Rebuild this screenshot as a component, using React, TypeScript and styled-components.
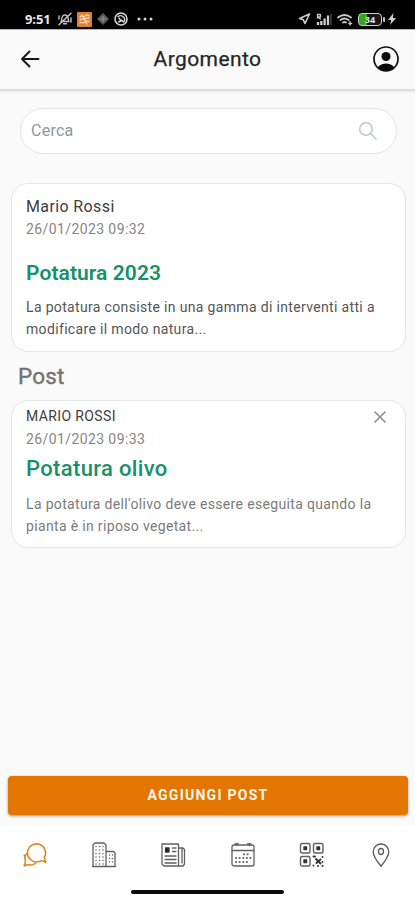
import React from "react";
import styled, { createGlobalStyle } from "styled-components";

const GlobalStyle = createGlobalStyle`
  * { box-sizing: border-box; }
  body { margin: 0; background: #fafafa; }
  h1, h2, h3, p { margin: 0; }
  button { font: inherit; border: 0; padding: 0; background: none; }
  svg { display: block; }
`;

const Screen = styled.div`
  width: 415px;
  height: 900px;
  display: flex;
  flex-direction: column;
  overflow: hidden;
  background: #fafafa;
  font-family: Roboto, sans-serif;
`;

const StatusBar = styled.div`
  flex: none;
  height: 29px;
  padding: 8px 19px 0 25px;
  display: flex;
  justify-content: space-between;
  background: #000;
`;

const StatusGroup = styled.div<{ $gap: number }>`
  display: flex;
  align-items: center;
  height: 22px;
  gap: ${(p) => p.$gap}px;
`;

const Clock = styled.span`
  width: 27px;
  margin-right: 2px;
  color: #e8e8e8;
  font: 700 13px/22px "Open Sans", sans-serif;
  letter-spacing: -0.1px;
  white-space: nowrap;
`;

const Notifications = styled.div`
  display: flex;
  align-items: center;
  gap: 5px;
`;

const OverflowDots = styled.span`
  margin-left: 4px;
`;

const Header = styled.header`
  flex: none;
  height: 62px;
  padding: 0 15px 1px 20px;
  display: flex;
  align-items: center;
  justify-content: space-between;
  border-top: 1px solid #b4b4b4;
  border-bottom: 2px solid #dedede;
  box-shadow: 0 1px 2px rgba(0, 0, 0, 0.06);
`;

const PageTitle = styled.h1`
  padding-left: 2px;
  color: #252525;
  font-size: 21px;
  font-weight: 400;
  line-height: 28px;
  letter-spacing: 0.42px;
  -webkit-text-stroke: 0.25px currentColor;
`;

const Content = styled.main`
  flex: 1;
  display: flex;
  flex-direction: column;
  padding: 17px 9px 0 11px;
`;

const SearchBox = styled.div`
  flex: none;
  height: 46px;
  margin: 0 9px 29px;
  padding: 0 18px 1px 10px;
  display: flex;
  align-items: center;
  justify-content: space-between;
  border: 1px solid #e3e5e6;
  border-radius: 23px;
  background: #fff;
  color: #8e989f;
  font-size: 16px;
  letter-spacing: 0.25px;
`;

const Card = styled.article<{ $height: number; $top: number }>`
  flex: none;
  height: ${(p) => p.$height}px;
  padding: ${(p) => p.$top}px 19px 0 14px;
  border: 1px solid #e4e6e7;
  border-radius: 17px;
  background: #fff;
`;

const AuthorRow = styled.div`
  display: flex;
  justify-content: space-between;
  align-items: center;
`;

const Author = styled.p<{ $size: number; $spacing: number }>`
  color: #404040;
  font-size: ${(p) => p.$size}px;
  line-height: 23px;
  letter-spacing: ${(p) => p.$spacing}px;
`;

const DateText = styled.p`
  color: #858585;
  font-size: 14px;
  line-height: 22px;
  letter-spacing: 0.4px;
`;

const CardTitle = styled.h2<{ $gap: number; $size: number; $weight: number; $spacing: number }>`
  margin-top: ${(p) => p.$gap}px;
  color: #189069;
  font-size: ${(p) => p.$size}px;
  font-weight: ${(p) => p.$weight};
  line-height: 28px;
  letter-spacing: ${(p) => p.$spacing}px;
`;

const Excerpt = styled.p<{ $color: string; $gap: number }>`
  margin-top: ${(p) => p.$gap}px;
  color: ${(p) => p.$color};
  font-size: 14px;
  line-height: 22px;
  letter-spacing: 0.34px;
  white-space: nowrap;
`;

const SectionTitle = styled.h2`
  flex: none;
  height: 48px;
  padding-left: 7px;
  color: #737373;
  font-size: 22.5px;
  font-weight: 400;
  line-height: 48px;
  letter-spacing: 0.2px;
  -webkit-text-stroke: 0.4px currentColor;
`;

const AddButton = styled.button`
  flex: none;
  height: 39px;
  margin: 0 7px 10px 8px;
  padding-bottom: 1px;
  border-radius: 4px;
  background: #e37600;
  box-shadow: 0 1px 3px rgba(0, 0, 0, 0.4);
  color: #fff6ea;
  font-family: Roboto, sans-serif;
  font-size: 14px;
  font-weight: 700;
  letter-spacing: 1.25px;
`;

const NavBar = styled.nav`
  flex: none;
  height: 65px;
  padding: 17px 0 0;
  display: grid;
  grid-template-columns: repeat(6, 69.3px);
  justify-items: center;
  background: #fff;
`;

const NavItem = styled.button<{ $active?: boolean }>`
  width: 26px;
  height: 26px;
  color: ${(p) => (p.$active ? "#e08326" : "#606060")};
`;

const HomeArea = styled.div`
  flex: none;
  height: 10px;
  background: #fff;
`;

const HomeIndicator = styled.div`
  width: 153px;
  height: 4px;
  margin-left: 131px;
  border-radius: 2px;
  background: #0b0b0b;
`;

const line = { fill: "none", stroke: "currentColor", strokeLinecap: "round", strokeLinejoin: "round" } as const;

const BellOffIcon = () => (
  <svg width="14" height="14" viewBox="0 0 14 14" {...line} stroke="#c4c4c4" strokeWidth="1.4">
    <path d="M3 9.5c1-1 .6-3.4 1.3-4.8C5.4 2.5 8.6 2.5 9.7 4.7c.7 1.4.3 3.8 1.3 4.8zM5.5 11.8h3M1 12.8 13 1.2M1 4v3M13 6v4" />
  </svg>
);

const AppBadgeIcon = () => (
  <svg width="15" height="15" viewBox="0 0 15 15">
    <rect width="15" height="15" rx="1" fill="#df8228" />
    <path d="M3 5c2-3 3 1 5-1s3-1 4 0M3 8c2-3 4 1 5-1s3 0 4-1M3 11c2-3 3 2 5-1s3 1 4-1M5 3l5 9" {...line} stroke="#f8dfc5" strokeWidth="1.3" />
  </svg>
);

const DiamondIcon = () => (
  <svg width="12" height="12" viewBox="0 0 12 12">
    <path d="M6 0 12 6 6 12 0 6z" fill="#5c5c5c" />
    <path d="M6 3v6M3 6h6" stroke="#929292" strokeWidth="1.2" />
  </svg>
);

const ChatBadgeIcon = () => (
  <svg width="14" height="14" viewBox="0 0 14 14" {...line} stroke="#d6d6d6" strokeWidth="1.6">
    <circle cx="7" cy="7" r="6" />
    <path d="M4 4.5q3-2 5.5.5t0 5L7.5 8M4.5 10l2.500-1-2-3" strokeWidth="1.4" />
  </svg>
);

const DotsIcon = () => (
  <svg width="16" height="4" viewBox="0 0 16 4" fill="#d6d6d6">
    <circle cx="2" cy="2" r="1.5" />
    <circle cx="8" cy="2" r="1.5" />
    <circle cx="14" cy="2" r="1.5" />
  </svg>
);

const LocationIcon = () => (
  <svg width="13" height="12" viewBox="0 0 13 12" {...line} stroke="#cfcfcf" strokeWidth="1.6">
    <path d="M11.5 1 1.5 5.5l3.800 1.300L7 10.500z" />
  </svg>
);

const SignalIcon = () => (
  <svg width="16" height="13" viewBox="0 0 16 13">
    <path d="M1.5 5V1.5h3V4h-3l3 2" {...line} stroke="#c7c7c7" strokeWidth="1.3" />
    <path d="M2 12V9M5.3 12V8M8.6 12V5.5M12 12V2.5" stroke="#cfcfcf" strokeWidth="2.3" />
    <path d="M15 12V1" stroke="#444" strokeWidth="1.5" />
  </svg>
);

const WifiIcon = () => (
  <svg width="16" height="13" viewBox="0 0 16 13" {...line} stroke="#c8c8c8" strokeWidth="1.8">
    <path d="M1 4.5q6.5-5 13 0M3.5 7q4-3 8 0M6 9.5q1.5-1 3 0" />
    <path d="M13 8.5v3.5M11.8 10.5h2.8" strokeWidth="1.3" />
  </svg>
);

const BatteryFrame = styled.div`
  display: grid;
  place-items: center;
  width: 24px;
  height: 13px;
  border: 1.5px solid #cecece;
  border-radius: 4px;
  background: linear-gradient(90deg, #35a61b 0 35%, #171717 35%);
  color: #e5e5e5;
  font: 700 9px/9px "Open Sans", sans-serif;
`;

const Power = styled.div`
  display: flex;
  align-items: center;
  gap: 1px;
  margin-right: -2px;
  &::after { content: ""; width: 2px; height: 5px; border-radius: 1px; background: #bbb; }
`;

const BoltIcon = () => (
  <svg width="8" height="12" viewBox="0 0 8 12">
    <path d="M5.500 0 0 7h3.200L2 12l6-7H4.800z" fill="#d0d0d0" />
  </svg>
);

const BackIcon = () => (
  <svg width="21" height="18" viewBox="0 0 21 18" {...line} stroke="#151515" strokeWidth="1.9">
    <path d="M9.5 1.5 2 9l7.5 7.5M2 9h16.500" />
  </svg>
);

const ProfileIcon = () => (
  <svg width="28" height="28" viewBox="0 0 28 28">
    <defs>
      <clipPath id="avatar"><circle cx="14" cy="14" r="12" /></clipPath>
    </defs>
    <circle cx="14" cy="14" r="12" fill="none" stroke="#111" strokeWidth="1.7" />
    <circle cx="14" cy="11.5" r="4.5" fill="#0b0b0b" />
    <ellipse cx="14" cy="24.5" rx="8.7" ry="6" fill="#0b0b0b" clipPath="url(#avatar)" />
  </svg>
);

const SearchIcon = () => (
  <svg width="20" height="20" viewBox="0 0 20 20" {...line} stroke="#c8cdd0" strokeWidth="1.7">
    <circle cx="8" cy="8" r="6.3" />
    <path d="m12.6 12.6 5.4 5.4" />
  </svg>
);

const CloseIcon = () => (
  <svg width="12" height="12" viewBox="0 0 12 12" {...line} stroke="#8c8c8c" strokeWidth="1.6">
    <path d="m1 1 10 10M11 1 1 11" />
  </svg>
);

const ForumIcon = () => (
  <svg width="26" height="26" viewBox="0 0 26 26" {...line} strokeWidth="1.5">
    <path d="M16 19.8A9 9 0 1 1 22.3 15.5L23.5 19.8 19.5 18.6Q18 19.6 16 19.8" />
    <path d="M5 11.5q-3.5 3.2-1.5 7.5l-1 4.5 4-.8q4 1.3 7-1.7" />
    <path d="M2.5 13.5v.1M2.500 23.500v.1M23.500 19.800v.1" strokeWidth="2.2" />
  </svg>
);

const BuildingIcon = () => (
  <svg width="26" height="26" viewBox="0 0 26 26" {...line} strokeWidth="1.3">
    <path d="M2 24.500V3L4 1h9l2 2v21.500zM15 9.500h7.500l1.500 1.500v13.500H15M1.500 24.500h23" />
    <path d="M5 4.500v18M8.500 4.500v18M12 4.500v18M18.500 13v10M21.500 13v10" strokeDasharray=".1 3.4" strokeWidth="1.5" />
  </svg>
);

const NewsIcon = () => (
  <svg width="26" height="26" viewBox="0 0 26 26" {...line} strokeWidth="1.3">
    <path d="M2 2h16.500v22H4l-2-2zM18.500 6H23l1.500 1.500V22L23 24h-4.500M22 7v14" />
    <path d="M12.500 6H16M12.500 9.500H16M5 14h11M5 17.500h11M5 21h11" />
    <rect x="5.5" y="6" width="3.5" height="4" fill="#222" stroke="#333" />
  </svg>
);

const CalendarIcon = () => (
  <svg width="26" height="26" viewBox="0 0 26 26" {...line} strokeWidth="1.3">
    <rect x="2" y="3" width="22" height="21" rx="2" />
    <path d="M2 8.500h22M6.500 1.500v2M19.500 1.500v2M5 2h3.500M17.500 2H21" />
    <path d="M14 12.300h7M6 16h15M6 20h11" strokeDasharray=".1 3.5" strokeWidth="2" />
  </svg>
);

const QrIcon = () => (
  <svg width="26" height="26" viewBox="0 0 26 26" {...line} strokeWidth="1.4">
    <rect x="1.5" y="1.5" width="9.5" height="9.5" rx="1.5" />
    <rect x="14.5" y="1.5" width="9.5" height="9.5" rx="1.5" />
    <rect x="1.5" y="14.5" width="9.5" height="9.5" rx="1.5" />
    <path d="M5 5h2.500v2.500H5zM18 5h2.500v2.500H18zM5 18h2.500v2.500H5z" fill="#333" stroke="#333" />
    <path d="M14.500 14.500h1.500M17 17l4.500 4.500M23.500 15v.1M21.500 17.500l-4 3.500M14.500 23.500v.1M23.500 20v.1M19 24h.1M23.500 24h.1" stroke="#333" strokeWidth="1.9" />
  </svg>
);

const PinIcon = () => (
  <svg width="26" height="26" viewBox="0 0 26 26" {...line} strokeWidth="1.4">
    <path d="M13 24.300C9.500 20 5.200 14.500 5.200 9.800a7.800 7.800 0 0 1 15.600 0C20.800 14.500 16.500 20 13 24.300z" />
    <ellipse cx="13" cy="9.5" rx="2.5" ry="3" />
  </svg>
);

const navigation = [
  { label: "Forum", Icon: ForumIcon },
  { label: "Aziende", Icon: BuildingIcon },
  { label: "Notizie", Icon: NewsIcon },
  { label: "Calendario", Icon: CalendarIcon },
  { label: "QR", Icon: QrIcon },
  { label: "Mappa", Icon: PinIcon },
];

export default function App() {
  return (
    <>
      <GlobalStyle />
      <Screen>
        <StatusBar>
          <StatusGroup $gap={4}>
            <Clock>9:51</Clock>
            <Notifications>
              <BellOffIcon />
              <AppBadgeIcon />
              <DiamondIcon />
              <ChatBadgeIcon />
              <OverflowDots><DotsIcon /></OverflowDots>
            </Notifications>
          </StatusGroup>
          <StatusGroup $gap={5}>
            <LocationIcon />
            <SignalIcon />
            <WifiIcon />
            <Power><BatteryFrame>34</BatteryFrame></Power>
            <BoltIcon />
          </StatusGroup>
        </StatusBar>
        <Header>
          <BackIcon />
          <PageTitle>Argomento</PageTitle>
          <ProfileIcon />
        </Header>
        <Content>
          <SearchBox><span>Cerca</span><SearchIcon /></SearchBox>
          <Card $height={169} $top={11}>
            <Author $size={16} $spacing={0.38}>Mario Rossi</Author>
            <DateText>26/01/2023 09:32</DateText>
            <CardTitle $gap={19} $size={21} $weight={600} $spacing={0.08}>Potatura 2023</CardTitle>
            <Excerpt $color="#555" $gap={9}>
              La potatura consiste in una gamma di interventi atti a<br />modificare il modo natura...
            </Excerpt>
          </Card>
          <SectionTitle>Post</SectionTitle>
          <Card $height={148} $top={4}>
            <AuthorRow>
              <Author $size={14} $spacing={0.38}>MARIO ROSSI</Author>
              <CloseIcon />
            </AuthorRow>
            <DateText>26/01/2023 09:33</DateText>
            <CardTitle $gap={5} $size={22} $weight={500} $spacing={0.35}>Potatura olivo</CardTitle>
            <Excerpt $color="#7b7b7b" $gap={10}>
              La potatura dell'olivo deve essere eseguita quando la<br />pianta è in riposo vegetat...
            </Excerpt>
          </Card>
        </Content>
        <AddButton>AGGIUNGI POST</AddButton>
        <NavBar>
          {navigation.map(({ label, Icon }, index) => (
            <NavItem key={label} aria-label={label} $active={index === 0}><Icon /></NavItem>
          ))}
        </NavBar>
        <HomeArea><HomeIndicator /></HomeArea>
      </Screen>
    </>
  );
}
